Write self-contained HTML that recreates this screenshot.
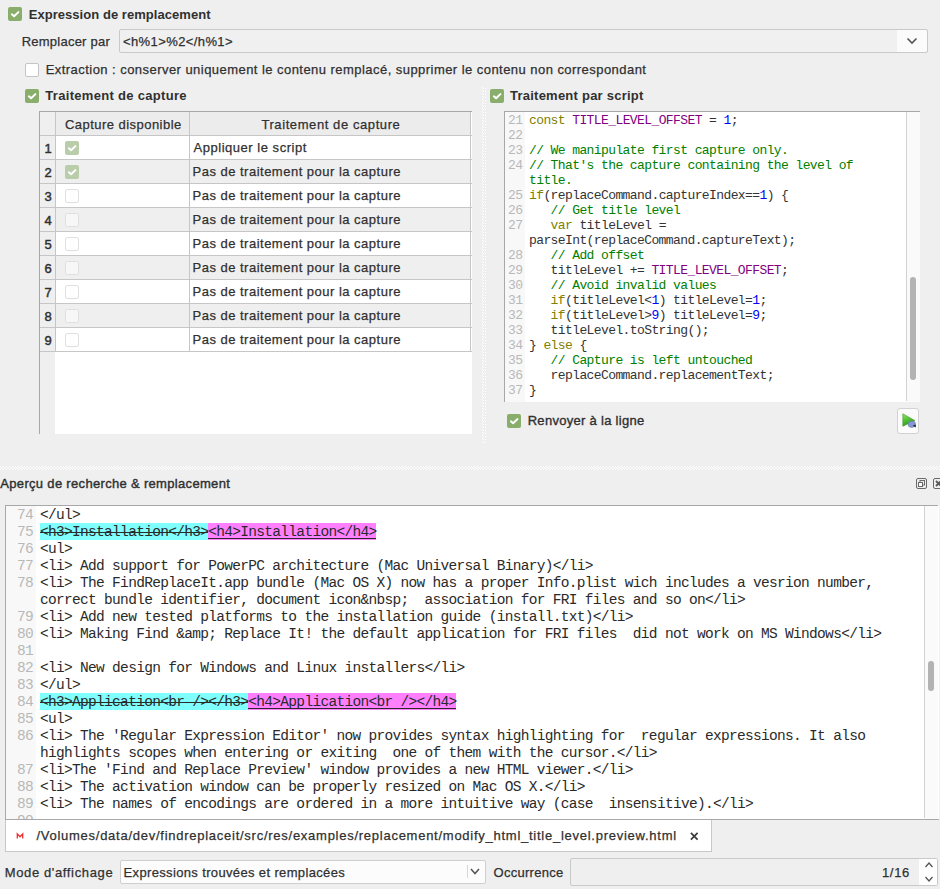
<!DOCTYPE html><html><head><meta charset="utf-8"><style>
html,body{margin:0;padding:0;width:940px;height:889px;overflow:hidden;background:#efefef}
.t{position:absolute;white-space:pre;font-family:"Liberation Sans",sans-serif;line-height:15px}
.m{position:absolute;white-space:pre;font-family:"Liberation Mono",monospace;color:#333}
.b{position:absolute}
</style></head><body><div class="b" style="left:8px;top:7px;width:14px;height:14px;background:#89ad6b;border-radius:2px"><svg width="14" height="14" viewBox="0 0 14 14" style="position:absolute;left:0;top:0"><path d="M3.9 7.3 L6.1 9.3 L10.4 5.1" fill="none" stroke="#fff" stroke-width="2" stroke-linecap="round" stroke-linejoin="round"/></svg></div>
<div class="t" style="left:28.7px;top:7px;font-size:13px;font-weight:bold;letter-spacing:0.048px;color:#303030;">Expression de remplacement</div>
<div class="t" style="left:21.7px;top:34px;font-size:13px;font-weight:normal;letter-spacing:0.239px;color:#303030;-webkit-text-stroke:0.25px #303030;">Remplacer par</div>
<div class="b" style="left:119px;top:29px;width:809px;height:24px;border:1px solid #c9c9c9;border-radius:2px;background:#f0f0f0;box-sizing:border-box"></div>
<div class="b" style="left:897px;top:30px;width:30px;height:22px;background:#fbfbfb;border-radius:0 2px 2px 0"></div>
<svg class="b" style="left:906px;top:37px" width="12" height="8" viewBox="0 0 12 8"><path d="M1.5 1.5 L6 6 L10.5 1.5" fill="none" stroke="#555" stroke-width="1.6"/></svg>
<div class="t" style="left:123px;top:34px;font-size:13px;font-weight:normal;letter-spacing:0.399px;color:#303030;-webkit-text-stroke:0.25px #303030;">&lt;h%1&gt;%2&lt;/h%1&gt;</div>
<div class="b" style="left:25px;top:63px;width:12px;height:12px;border:1px solid #c4c4c4;background:#fff;border-radius:2px"></div>
<div class="t" style="left:45.7px;top:62px;font-size:13px;font-weight:normal;letter-spacing:0.453px;color:#303030;-webkit-text-stroke:0.25px #303030;">Extraction : conserver uniquement le contenu remplacé, supprimer le contenu non correspondant</div>
<div class="b" style="left:25px;top:89px;width:14px;height:14px;background:#89ad6b;border-radius:2px"><svg width="14" height="14" viewBox="0 0 14 14" style="position:absolute;left:0;top:0"><path d="M3.9 7.3 L6.1 9.3 L10.4 5.1" fill="none" stroke="#fff" stroke-width="2" stroke-linecap="round" stroke-linejoin="round"/></svg></div>
<div class="t" style="left:45.3px;top:88px;font-size:13px;font-weight:bold;letter-spacing:0.307px;color:#303030;">Traitement de capture</div>
<div class="b" style="left:490px;top:89px;width:14px;height:14px;background:#89ad6b;border-radius:2px"><svg width="14" height="14" viewBox="0 0 14 14" style="position:absolute;left:0;top:0"><path d="M3.9 7.3 L6.1 9.3 L10.4 5.1" fill="none" stroke="#fff" stroke-width="2" stroke-linecap="round" stroke-linejoin="round"/></svg></div>
<div class="t" style="left:510px;top:88px;font-size:13px;font-weight:bold;letter-spacing:0.237px;color:#303030;">Traitement par script</div>
<svg class="b" style="left:482px;top:87px" width="4" height="356"><defs><pattern id="pv" width="4" height="3" patternUnits="userSpaceOnUse"><rect x="0" y="0" width="1" height="1" fill="#fff"/><rect x="1" y="1" width="1" height="1" fill="#fff"/><rect x="3" y="1" width="1" height="1" fill="#fff"/></pattern></defs><rect width="4" height="356" fill="url(#pv)"/></svg>
<svg class="b" style="left:0;top:466px" width="940" height="4"><defs><pattern id="ph" width="3" height="4" patternUnits="userSpaceOnUse"><rect x="0" y="0" width="1" height="1" fill="#fff"/><rect x="1" y="1" width="1" height="1" fill="#fff"/><rect x="2" y="2" width="1" height="1" fill="#fff"/><rect x="0" y="3" width="1" height="1" fill="#fff"/></pattern></defs><rect width="940" height="4" fill="url(#ph)"/></svg>
<div class="b" style="left:39px;top:111px;width:433px;height:323px;background:#fff"></div>
<div class="b" style="left:39px;top:111px;width:16px;height:323px;background:#efefef"></div>
<div class="b" style="left:55px;top:111px;width:416px;height:24px;background:#ececec"></div>
<div class="t" style="left:64.9px;top:117px;font-size:13px;font-weight:normal;letter-spacing:0.466px;color:#303030;-webkit-text-stroke:0.25px #303030;">Capture disponible</div>
<div class="t" style="left:261.4px;top:117px;font-size:13px;font-weight:normal;letter-spacing:0.587px;color:#303030;-webkit-text-stroke:0.25px #303030;">Traitement de capture</div>
<div class="b" style="left:55px;top:136px;width:416px;height:23px;background:#fff"></div>
<div class="t" style="left:44.5px;top:141px;font-size:13px;font-weight:normal;letter-spacing:0px;color:#303030;-webkit-text-stroke:0.45px #303030;">1</div>
<div class="b" style="left:65px;top:141px;width:14px;height:14px;background:#b9cdaa;border-radius:2px"><svg width="14" height="14" viewBox="0 0 14 14" style="position:absolute;left:0;top:0"><path d="M3.9 7.3 L6.1 9.3 L10.4 5.1" fill="none" stroke="#fff" stroke-width="2" stroke-linecap="round" stroke-linejoin="round"/></svg></div>
<div class="t" style="left:193.5px;top:140px;font-size:13px;font-weight:normal;letter-spacing:0.527px;color:#303030;-webkit-text-stroke:0.25px #303030;">Appliquer le script</div>
<div class="b" style="left:55px;top:160px;width:416px;height:23px;background:#efefef"></div>
<div class="t" style="left:44.5px;top:165px;font-size:13px;font-weight:normal;letter-spacing:0px;color:#303030;-webkit-text-stroke:0.45px #303030;">2</div>
<div class="b" style="left:65px;top:165px;width:14px;height:14px;background:#b9cdaa;border-radius:2px"><svg width="14" height="14" viewBox="0 0 14 14" style="position:absolute;left:0;top:0"><path d="M3.9 7.3 L6.1 9.3 L10.4 5.1" fill="none" stroke="#fff" stroke-width="2" stroke-linecap="round" stroke-linejoin="round"/></svg></div>
<div class="t" style="left:192.5px;top:164px;font-size:13px;font-weight:normal;letter-spacing:0.491px;color:#303030;-webkit-text-stroke:0.25px #303030;">Pas de traitement pour la capture</div>
<div class="b" style="left:55px;top:184px;width:416px;height:23px;background:#fff"></div>
<div class="t" style="left:44.5px;top:189px;font-size:13px;font-weight:normal;letter-spacing:0px;color:#303030;-webkit-text-stroke:0.45px #303030;">3</div>
<div class="b" style="left:65px;top:189px;width:12px;height:12px;border:1px solid #e0e0e0;background:#fff;border-radius:2px"></div>
<div class="t" style="left:192.5px;top:188px;font-size:13px;font-weight:normal;letter-spacing:0.491px;color:#303030;-webkit-text-stroke:0.25px #303030;">Pas de traitement pour la capture</div>
<div class="b" style="left:55px;top:208px;width:416px;height:23px;background:#efefef"></div>
<div class="t" style="left:44.5px;top:213px;font-size:13px;font-weight:normal;letter-spacing:0px;color:#303030;-webkit-text-stroke:0.45px #303030;">4</div>
<div class="b" style="left:65px;top:213px;width:12px;height:12px;border:1px solid #e0e0e0;background:#f7f7f7;border-radius:2px"></div>
<div class="t" style="left:192.5px;top:212px;font-size:13px;font-weight:normal;letter-spacing:0.491px;color:#303030;-webkit-text-stroke:0.25px #303030;">Pas de traitement pour la capture</div>
<div class="b" style="left:55px;top:232px;width:416px;height:23px;background:#fff"></div>
<div class="t" style="left:44.5px;top:237px;font-size:13px;font-weight:normal;letter-spacing:0px;color:#303030;-webkit-text-stroke:0.45px #303030;">5</div>
<div class="b" style="left:65px;top:237px;width:12px;height:12px;border:1px solid #e0e0e0;background:#fff;border-radius:2px"></div>
<div class="t" style="left:192.5px;top:236px;font-size:13px;font-weight:normal;letter-spacing:0.491px;color:#303030;-webkit-text-stroke:0.25px #303030;">Pas de traitement pour la capture</div>
<div class="b" style="left:55px;top:256px;width:416px;height:23px;background:#efefef"></div>
<div class="t" style="left:44.5px;top:261px;font-size:13px;font-weight:normal;letter-spacing:0px;color:#303030;-webkit-text-stroke:0.45px #303030;">6</div>
<div class="b" style="left:65px;top:261px;width:12px;height:12px;border:1px solid #e0e0e0;background:#f7f7f7;border-radius:2px"></div>
<div class="t" style="left:192.5px;top:260px;font-size:13px;font-weight:normal;letter-spacing:0.491px;color:#303030;-webkit-text-stroke:0.25px #303030;">Pas de traitement pour la capture</div>
<div class="b" style="left:55px;top:280px;width:416px;height:23px;background:#fff"></div>
<div class="t" style="left:44.5px;top:285px;font-size:13px;font-weight:normal;letter-spacing:0px;color:#303030;-webkit-text-stroke:0.45px #303030;">7</div>
<div class="b" style="left:65px;top:285px;width:12px;height:12px;border:1px solid #e0e0e0;background:#fff;border-radius:2px"></div>
<div class="t" style="left:192.5px;top:284px;font-size:13px;font-weight:normal;letter-spacing:0.491px;color:#303030;-webkit-text-stroke:0.25px #303030;">Pas de traitement pour la capture</div>
<div class="b" style="left:55px;top:304px;width:416px;height:23px;background:#efefef"></div>
<div class="t" style="left:44.5px;top:309px;font-size:13px;font-weight:normal;letter-spacing:0px;color:#303030;-webkit-text-stroke:0.45px #303030;">8</div>
<div class="b" style="left:65px;top:309px;width:12px;height:12px;border:1px solid #e0e0e0;background:#f7f7f7;border-radius:2px"></div>
<div class="t" style="left:192.5px;top:308px;font-size:13px;font-weight:normal;letter-spacing:0.491px;color:#303030;-webkit-text-stroke:0.25px #303030;">Pas de traitement pour la capture</div>
<div class="b" style="left:55px;top:328px;width:416px;height:23px;background:#fff"></div>
<div class="t" style="left:44.5px;top:333px;font-size:13px;font-weight:normal;letter-spacing:0px;color:#303030;-webkit-text-stroke:0.45px #303030;">9</div>
<div class="b" style="left:65px;top:333px;width:12px;height:12px;border:1px solid #e0e0e0;background:#fff;border-radius:2px"></div>
<div class="t" style="left:192.5px;top:332px;font-size:13px;font-weight:normal;letter-spacing:0.491px;color:#303030;-webkit-text-stroke:0.25px #303030;">Pas de traitement pour la capture</div>
<div class="b" style="left:39px;top:135px;width:433px;height:1px;background:#c6c6c6"></div>
<div class="b" style="left:39px;top:159px;width:433px;height:1px;background:#c6c6c6"></div>
<div class="b" style="left:39px;top:183px;width:433px;height:1px;background:#c6c6c6"></div>
<div class="b" style="left:39px;top:207px;width:433px;height:1px;background:#c6c6c6"></div>
<div class="b" style="left:39px;top:231px;width:433px;height:1px;background:#c6c6c6"></div>
<div class="b" style="left:39px;top:255px;width:433px;height:1px;background:#c6c6c6"></div>
<div class="b" style="left:39px;top:279px;width:433px;height:1px;background:#c6c6c6"></div>
<div class="b" style="left:39px;top:303px;width:433px;height:1px;background:#c6c6c6"></div>
<div class="b" style="left:39px;top:327px;width:433px;height:1px;background:#c6c6c6"></div>
<div class="b" style="left:39px;top:351px;width:433px;height:1px;background:#c6c6c6"></div>
<div class="b" style="left:55px;top:111px;width:1px;height:240px;background:#c6c6c6"></div>
<div class="b" style="left:189px;top:111px;width:1px;height:240px;background:#c6c6c6"></div>
<div class="b" style="left:470px;top:111px;width:1px;height:240px;background:#c6c6c6"></div>
<div class="b" style="left:39px;top:111px;width:433px;height:1px;background:#a8a8a8"></div>
<div class="b" style="left:39px;top:111px;width:1px;height:323px;background:#a8a8a8"></div>
<div class="b" style="left:504px;top:111px;width:416px;height:291px;background:#fff"></div>
<div class="b" style="left:505px;top:112px;width:20px;height:290px;background:#f8f8f8"></div>
<div class="b" style="left:504px;top:111px;width:416px;height:1px;background:#a8a8a8"></div>
<div class="b" style="left:504px;top:111px;width:1px;height:291px;background:#a8a8a8"></div>
<div class="b" style="left:906px;top:112px;width:1px;height:289px;background:#d2d2d2"></div>
<div class="b" style="left:907px;top:112px;width:13px;height:290px;background:#fafafa"></div>
<div class="b" style="left:910px;top:277px;width:6px;height:103px;background:#b3b3b3;border-radius:3px"></div>
<div class="m" style="left:508px;top:113px;font-size:13px;letter-spacing:-0.6px;line-height:15px;color:#b8b8b8">21</div>
<div class="m" style="left:529px;top:113px;font-size:13px;letter-spacing:-0.6px;line-height:15px"><span style="color:#808000">const </span><span style="color:#800080">TITLE_LEVEL_OFFSET</span><span style="color:#333"> = </span><span style="color:#0000ff">1</span><span style="color:#333">;</span></div>
<div class="m" style="left:508px;top:128px;font-size:13px;letter-spacing:-0.6px;line-height:15px;color:#b8b8b8">22</div>
<div class="m" style="left:529px;top:128px;font-size:13px;letter-spacing:-0.6px;line-height:15px"></div>
<div class="m" style="left:508px;top:143px;font-size:13px;letter-spacing:-0.6px;line-height:15px;color:#b8b8b8">23</div>
<div class="m" style="left:529px;top:143px;font-size:13px;letter-spacing:-0.6px;line-height:15px"><span style="color:#008000">// We manipulate first capture only.</span></div>
<div class="m" style="left:508px;top:158px;font-size:13px;letter-spacing:-0.6px;line-height:15px;color:#b8b8b8">24</div>
<div class="m" style="left:529px;top:158px;font-size:13px;letter-spacing:-0.6px;line-height:15px"><span style="color:#008000">// That&#x27;s the capture containing the level of</span></div>
<div class="m" style="left:529px;top:173px;font-size:13px;letter-spacing:-0.6px;line-height:15px"><span style="color:#008000">title.</span></div>
<div class="m" style="left:508px;top:188px;font-size:13px;letter-spacing:-0.6px;line-height:15px;color:#b8b8b8">25</div>
<div class="m" style="left:529px;top:188px;font-size:13px;letter-spacing:-0.6px;line-height:15px"><span style="color:#808000">if</span><span style="color:#333">(replaceCommand.captureIndex==</span><span style="color:#0000ff">1</span><span style="color:#333">) {</span></div>
<div class="m" style="left:508px;top:203px;font-size:13px;letter-spacing:-0.6px;line-height:15px;color:#b8b8b8">26</div>
<div class="m" style="left:529px;top:203px;font-size:13px;letter-spacing:-0.6px;line-height:15px"><span style="color:#008000">   // Get title level</span></div>
<div class="m" style="left:508px;top:218px;font-size:13px;letter-spacing:-0.6px;line-height:15px;color:#b8b8b8">27</div>
<div class="m" style="left:529px;top:218px;font-size:13px;letter-spacing:-0.6px;line-height:15px"><span style="color:#333">   </span><span style="color:#808000">var</span><span style="color:#333"> titleLevel =</span></div>
<div class="m" style="left:529px;top:233px;font-size:13px;letter-spacing:-0.6px;line-height:15px"><span style="color:#333">parseInt(replaceCommand.captureText);</span></div>
<div class="m" style="left:508px;top:248px;font-size:13px;letter-spacing:-0.6px;line-height:15px;color:#b8b8b8">28</div>
<div class="m" style="left:529px;top:248px;font-size:13px;letter-spacing:-0.6px;line-height:15px"><span style="color:#008000">   // Add offset</span></div>
<div class="m" style="left:508px;top:263px;font-size:13px;letter-spacing:-0.6px;line-height:15px;color:#b8b8b8">29</div>
<div class="m" style="left:529px;top:263px;font-size:13px;letter-spacing:-0.6px;line-height:15px"><span style="color:#333">   titleLevel += </span><span style="color:#800080">TITLE_LEVEL_OFFSET</span><span style="color:#333">;</span></div>
<div class="m" style="left:508px;top:278px;font-size:13px;letter-spacing:-0.6px;line-height:15px;color:#b8b8b8">30</div>
<div class="m" style="left:529px;top:278px;font-size:13px;letter-spacing:-0.6px;line-height:15px"><span style="color:#008000">   // Avoid invalid values</span></div>
<div class="m" style="left:508px;top:293px;font-size:13px;letter-spacing:-0.6px;line-height:15px;color:#b8b8b8">31</div>
<div class="m" style="left:529px;top:293px;font-size:13px;letter-spacing:-0.6px;line-height:15px"><span style="color:#333">   </span><span style="color:#808000">if</span><span style="color:#333">(titleLevel&lt;</span><span style="color:#0000ff">1</span><span style="color:#333">) titleLevel=</span><span style="color:#0000ff">1</span><span style="color:#333">;</span></div>
<div class="m" style="left:508px;top:308px;font-size:13px;letter-spacing:-0.6px;line-height:15px;color:#b8b8b8">32</div>
<div class="m" style="left:529px;top:308px;font-size:13px;letter-spacing:-0.6px;line-height:15px"><span style="color:#333">   </span><span style="color:#808000">if</span><span style="color:#333">(titleLevel&gt;</span><span style="color:#0000ff">9</span><span style="color:#333">) titleLevel=</span><span style="color:#0000ff">9</span><span style="color:#333">;</span></div>
<div class="m" style="left:508px;top:323px;font-size:13px;letter-spacing:-0.6px;line-height:15px;color:#b8b8b8">33</div>
<div class="m" style="left:529px;top:323px;font-size:13px;letter-spacing:-0.6px;line-height:15px"><span style="color:#333">   titleLevel.toString();</span></div>
<div class="m" style="left:508px;top:338px;font-size:13px;letter-spacing:-0.6px;line-height:15px;color:#b8b8b8">34</div>
<div class="m" style="left:529px;top:338px;font-size:13px;letter-spacing:-0.6px;line-height:15px"><span style="color:#333">} </span><span style="color:#808000">else</span><span style="color:#333"> {</span></div>
<div class="m" style="left:508px;top:353px;font-size:13px;letter-spacing:-0.6px;line-height:15px;color:#b8b8b8">35</div>
<div class="m" style="left:529px;top:353px;font-size:13px;letter-spacing:-0.6px;line-height:15px"><span style="color:#008000">   // Capture is left untouched</span></div>
<div class="m" style="left:508px;top:368px;font-size:13px;letter-spacing:-0.6px;line-height:15px;color:#b8b8b8">36</div>
<div class="m" style="left:529px;top:368px;font-size:13px;letter-spacing:-0.6px;line-height:15px"><span style="color:#333">   replaceCommand.replacementText;</span></div>
<div class="m" style="left:508px;top:383px;font-size:13px;letter-spacing:-0.6px;line-height:15px;color:#b8b8b8">37</div>
<div class="m" style="left:529px;top:383px;font-size:13px;letter-spacing:-0.6px;line-height:15px"><span style="color:#333">}</span></div>
<div class="b" style="left:507px;top:414px;width:14px;height:14px;background:#89ad6b;border-radius:2px"><svg width="14" height="14" viewBox="0 0 14 14" style="position:absolute;left:0;top:0"><path d="M3.9 7.3 L6.1 9.3 L10.4 5.1" fill="none" stroke="#fff" stroke-width="2" stroke-linecap="round" stroke-linejoin="round"/></svg></div>
<div class="t" style="left:527.7px;top:413px;font-size:13px;font-weight:normal;letter-spacing:0.291px;color:#303030;-webkit-text-stroke:0.35px #303030;">Renvoyer à la ligne</div>
<div class="b" style="left:897px;top:408px;width:22px;height:26px;background:#fbfbfb;border:1px solid #d2d2d2;border-radius:3px;box-sizing:border-box"></div>
<svg class="b" style="left:901px;top:413px" width="16" height="16" viewBox="0 0 16 16"><defs><linearGradient id="gg" x1="0" y1="0" x2="0.3" y2="1"><stop offset="0" stop-color="#8ee860"/><stop offset="1" stop-color="#22a010"/></linearGradient></defs><path d="M1.8 0.7 L13.8 7.5 L1.8 13.3 Z" fill="url(#gg)" stroke="#2f8f1c" stroke-width="0.5"/><ellipse cx="10.8" cy="11.2" rx="3.8" ry="3.2" fill="#8399cf" stroke="#5d6e9c" stroke-width="0.5"/><path d="M11.8 12.6 L14.6 11.4 L14.9 14.6 Z" fill="#1c2232"/></svg>
<div class="t" style="left:0.3px;top:476px;font-size:13px;font-weight:normal;letter-spacing:0.32px;color:#303030;-webkit-text-stroke:0.4px #303030;">Aperçu de recherche &amp; remplacement</div>
<svg class="b" style="left:916px;top:478px" width="11" height="11" viewBox="0 0 11 11"><rect x="0.5" y="0.5" width="10" height="10" rx="1.5" fill="none" stroke="#6a6a6a"/><rect x="4" y="2.5" width="4.5" height="4.5" fill="none" stroke="#6a6a6a"/><rect x="2.5" y="4.5" width="4" height="4" fill="#fff" stroke="#6a6a6a"/></svg>
<svg class="b" style="left:933px;top:478px" width="11" height="11" viewBox="0 0 11 11"><rect x="0.5" y="0.5" width="10" height="10" rx="1.5" fill="none" stroke="#6a6a6a"/><path d="M3 3 L8 8 M8 3 L3 8" stroke="#5a5a5a" stroke-width="1.8"/></svg>
<div class="b" style="left:5px;top:505px;width:934px;height:315px;background:#fff"></div>
<div class="b" style="left:6px;top:506px;width:30px;height:313px;background:#f8f8f8"></div>
<div class="b" style="left:5px;top:505px;width:933px;height:1px;background:#a8a8a8"></div>
<div class="b" style="left:5px;top:505px;width:1px;height:315px;background:#a8a8a8"></div>
<div class="b" style="left:924px;top:506px;width:1px;height:312px;background:#d2d2d2"></div>
<div class="b" style="left:925px;top:506px;width:13px;height:313px;background:#fafafa"></div>
<div class="b" style="left:928px;top:661px;width:6px;height:30px;background:#b3b3b3;border-radius:3px"></div>
<div class="b" style="left:6px;top:506px;width:918px;height:313px;overflow:hidden">
<div class="m" style="left:11px;top:1px;font-size:14.5px;letter-spacing:-0.69px;line-height:17px;color:#b8b8b8">74</div>
<div class="m" style="left:34px;top:1px;font-size:14.5px;letter-spacing:-0.69px;line-height:17px;color:#2a2a2a">&lt;/ul&gt;</div>
<div class="m" style="left:11px;top:18px;font-size:14.5px;letter-spacing:-0.69px;line-height:17px;color:#b8b8b8">75</div>
<div class="b" style="left:34px;top:17px;width:168px;height:17px;background:#80ffff"></div>
<div class="b" style="left:34px;top:26px;width:168px;height:1px;background:#2a2a2a"></div>
<div class="b" style="left:202px;top:17px;width:168px;height:17px;background:#ff80ff"></div>
<div class="b" style="left:202px;top:32px;width:168px;height:1px;background:#2a2a2a"></div>
<div class="m" style="left:34px;top:18px;font-size:14.5px;letter-spacing:-0.69px;line-height:17px;color:#2a2a2a">&lt;h3&gt;Installation&lt;/h3&gt;&lt;h4&gt;Installation&lt;/h4&gt;</div>
<div class="m" style="left:11px;top:35px;font-size:14.5px;letter-spacing:-0.69px;line-height:17px;color:#b8b8b8">76</div>
<div class="m" style="left:34px;top:35px;font-size:14.5px;letter-spacing:-0.69px;line-height:17px;color:#2a2a2a">&lt;ul&gt;</div>
<div class="m" style="left:11px;top:52px;font-size:14.5px;letter-spacing:-0.69px;line-height:17px;color:#b8b8b8">77</div>
<div class="m" style="left:34px;top:52px;font-size:14.5px;letter-spacing:-0.69px;line-height:17px;color:#2a2a2a">&lt;li&gt; Add support for PowerPC architecture (Mac Universal Binary)&lt;/li&gt;</div>
<div class="m" style="left:11px;top:69px;font-size:14.5px;letter-spacing:-0.69px;line-height:17px;color:#b8b8b8">78</div>
<div class="m" style="left:34px;top:69px;font-size:14.5px;letter-spacing:-0.69px;line-height:17px;color:#2a2a2a">&lt;li&gt; The FindReplaceIt.app bundle (Mac OS X) now has a proper Info.plist wich includes a vesrion number,</div>
<div class="m" style="left:34px;top:86px;font-size:14.5px;letter-spacing:-0.69px;line-height:17px;color:#2a2a2a">correct bundle identifier, document icon&amp;nbsp;  association for FRI files and so on&lt;/li&gt;</div>
<div class="m" style="left:11px;top:103px;font-size:14.5px;letter-spacing:-0.69px;line-height:17px;color:#b8b8b8">79</div>
<div class="m" style="left:34px;top:103px;font-size:14.5px;letter-spacing:-0.69px;line-height:17px;color:#2a2a2a">&lt;li&gt; Add new tested platforms to the installation guide (install.txt)&lt;/li&gt;</div>
<div class="m" style="left:11px;top:120px;font-size:14.5px;letter-spacing:-0.69px;line-height:17px;color:#b8b8b8">80</div>
<div class="m" style="left:34px;top:120px;font-size:14.5px;letter-spacing:-0.69px;line-height:17px;color:#2a2a2a">&lt;li&gt; Making Find &amp;amp; Replace It! the default application for FRI files  did not work on MS Windows&lt;/li&gt;</div>
<div class="m" style="left:11px;top:137px;font-size:14.5px;letter-spacing:-0.69px;line-height:17px;color:#b8b8b8">81</div>
<div class="m" style="left:34px;top:137px;font-size:14.5px;letter-spacing:-0.69px;line-height:17px;color:#2a2a2a"></div>
<div class="m" style="left:11px;top:154px;font-size:14.5px;letter-spacing:-0.69px;line-height:17px;color:#b8b8b8">82</div>
<div class="m" style="left:34px;top:154px;font-size:14.5px;letter-spacing:-0.69px;line-height:17px;color:#2a2a2a">&lt;li&gt; New design for Windows and Linux installers&lt;/li&gt;</div>
<div class="m" style="left:11px;top:171px;font-size:14.5px;letter-spacing:-0.69px;line-height:17px;color:#b8b8b8">83</div>
<div class="m" style="left:34px;top:171px;font-size:14.5px;letter-spacing:-0.69px;line-height:17px;color:#2a2a2a">&lt;/ul&gt;</div>
<div class="m" style="left:11px;top:188px;font-size:14.5px;letter-spacing:-0.69px;line-height:17px;color:#b8b8b8">84</div>
<div class="b" style="left:34px;top:187px;width:208px;height:17px;background:#80ffff"></div>
<div class="b" style="left:34px;top:196px;width:208px;height:1px;background:#2a2a2a"></div>
<div class="b" style="left:242px;top:187px;width:208px;height:17px;background:#ff80ff"></div>
<div class="b" style="left:242px;top:202px;width:208px;height:1px;background:#2a2a2a"></div>
<div class="m" style="left:34px;top:188px;font-size:14.5px;letter-spacing:-0.69px;line-height:17px;color:#2a2a2a">&lt;h3&gt;Application&lt;br /&gt;&lt;/h3&gt;&lt;h4&gt;Application&lt;br /&gt;&lt;/h4&gt;</div>
<div class="m" style="left:11px;top:205px;font-size:14.5px;letter-spacing:-0.69px;line-height:17px;color:#b8b8b8">85</div>
<div class="m" style="left:34px;top:205px;font-size:14.5px;letter-spacing:-0.69px;line-height:17px;color:#2a2a2a">&lt;ul&gt;</div>
<div class="m" style="left:11px;top:222px;font-size:14.5px;letter-spacing:-0.69px;line-height:17px;color:#b8b8b8">86</div>
<div class="m" style="left:34px;top:222px;font-size:14.5px;letter-spacing:-0.69px;line-height:17px;color:#2a2a2a">&lt;li&gt; The &#x27;Regular Expression Editor&#x27; now provides syntax highlighting for  regular expressions. It also</div>
<div class="m" style="left:34px;top:239px;font-size:14.5px;letter-spacing:-0.69px;line-height:17px;color:#2a2a2a">highlights scopes when entering or exiting  one of them with the cursor.&lt;/li&gt;</div>
<div class="m" style="left:11px;top:256px;font-size:14.5px;letter-spacing:-0.69px;line-height:17px;color:#b8b8b8">87</div>
<div class="m" style="left:34px;top:256px;font-size:14.5px;letter-spacing:-0.69px;line-height:17px;color:#2a2a2a">&lt;li&gt;The &#x27;Find and Replace Preview&#x27; window provides a new HTML viewer.&lt;/li&gt;</div>
<div class="m" style="left:11px;top:273px;font-size:14.5px;letter-spacing:-0.69px;line-height:17px;color:#b8b8b8">88</div>
<div class="m" style="left:34px;top:273px;font-size:14.5px;letter-spacing:-0.69px;line-height:17px;color:#2a2a2a">&lt;li&gt; The activation window can be properly resized on Mac OS X.&lt;/li&gt;</div>
<div class="m" style="left:11px;top:290px;font-size:14.5px;letter-spacing:-0.69px;line-height:17px;color:#b8b8b8">89</div>
<div class="m" style="left:34px;top:290px;font-size:14.5px;letter-spacing:-0.69px;line-height:17px;color:#2a2a2a">&lt;li&gt; The names of encodings are ordered in a more intuitive way (case  insensitive).&lt;/li&gt;</div>
<div class="m" style="left:11px;top:307px;font-size:14.5px;letter-spacing:-0.69px;line-height:17px;color:#b8b8b8">90</div>
<div class="m" style="left:34px;top:307px;font-size:14.5px;letter-spacing:-0.69px;line-height:17px;color:#2a2a2a"></div>
</div>
<div class="b" style="left:5px;top:819px;width:934px;height:1px;background:#a8a8a8"></div>
<div class="b" style="left:5px;top:820px;width:707px;height:32px;background:#fff;border-left:1px solid #c8c8c8;border-right:1px solid #c8c8c8;border-bottom:1px solid #c8c8c8;box-sizing:border-box"></div>
<svg class="b" style="left:16px;top:832px" width="8" height="8" viewBox="0 0 8 8"><path d="M1.3 6.6 V1.9 L4 4.8 L6.7 1.9 V6.6" fill="none" stroke="#f03030" stroke-width="1.3" stroke-linejoin="miter"/></svg>
<div class="t" style="left:36.4px;top:828px;font-size:13px;font-weight:normal;letter-spacing:0.74px;color:#303030;-webkit-text-stroke:0.25px #303030;">/Volumes/data/dev/findreplaceit/src/res/examples/replacement/modify_html_title_level.preview.html</div>
<svg class="b" style="left:690px;top:832px" width="9" height="9" viewBox="0 0 9 9"><path d="M0.9 0.9 L7.6 7.6 M7.6 0.9 L0.9 7.6" stroke="#3a3a3a" stroke-width="1.7"/></svg>
<div class="t" style="left:4.7px;top:865px;font-size:13px;font-weight:normal;letter-spacing:0.637px;color:#303030;-webkit-text-stroke:0.25px #303030;">Mode d&#x27;affichage</div>
<div class="b" style="left:120px;top:860px;width:366px;height:24px;background:#fcfcfc;border:1px solid #cfcfcf;border-radius:2px;box-sizing:border-box"></div>
<div class="b" style="left:467px;top:865px;width:1px;height:13px;background:#d8d8d8"></div>
<svg class="b" style="left:470px;top:868px" width="10" height="7" viewBox="0 0 10 7"><path d="M1 1 L5 5.5 L9 1" fill="none" stroke="#555" stroke-width="1.5"/></svg>
<div class="t" style="left:123.5px;top:865px;font-size:13px;font-weight:normal;letter-spacing:0.356px;color:#303030;-webkit-text-stroke:0.25px #303030;">Expressions trouvées et remplacées</div>
<div class="t" style="left:493.6px;top:865px;font-size:13px;font-weight:normal;letter-spacing:0.26px;color:#303030;-webkit-text-stroke:0.25px #303030;">Occurrence</div>
<div class="b" style="left:570px;top:858px;width:368px;height:28px;background:#efefef;border:1px solid #c9c9c9;border-radius:2px;box-sizing:border-box"></div>
<div class="b" style="left:919px;top:859px;width:18px;height:26px;background:#fff"></div>
<svg class="b" style="left:924px;top:861px" width="10" height="22" viewBox="0 0 10 22"><path d="M1.5 6 L5 2 L8.5 6 M1.5 16 L5 20 L8.5 16" fill="none" stroke="#555" stroke-width="1.3"/></svg>
<div class="t" style="left:882px;top:865px;font-size:13px;font-weight:normal;letter-spacing:0.643px;color:#303030;-webkit-text-stroke:0.25px #303030;">1/16</div></body></html>
